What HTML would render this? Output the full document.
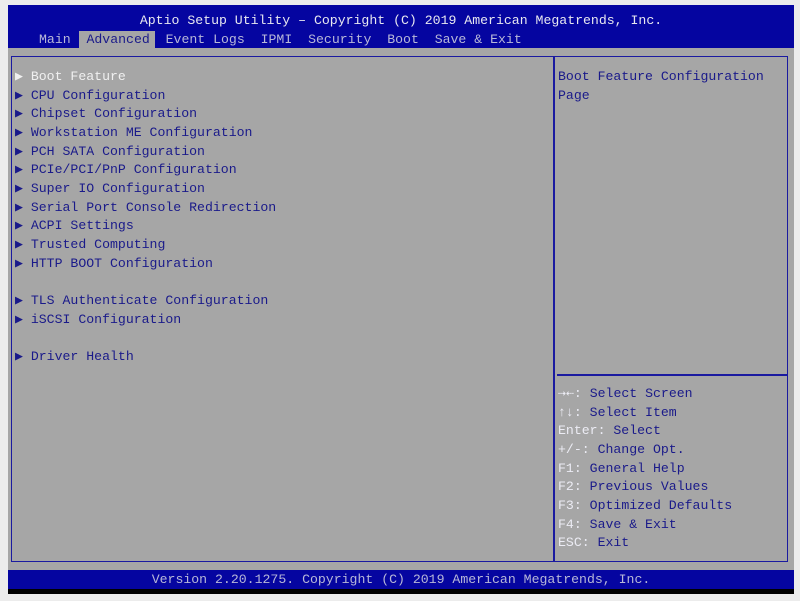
<!DOCTYPE html>
<html><head><style>
body{margin:0;width:800px;height:601px;background:#ececec;position:relative;overflow:hidden;font-family:"Liberation Mono","DejaVu Sans Mono",monospace;font-size:13.2px}
div{position:absolute}
.t{white-space:pre;line-height:18.65px}
</style></head><body>
<div style="left:8px;top:5px;width:786px;height:43px;background:#0505a0"></div>
<div class="t" style="left:8px;top:12px;width:786px;text-align:center;color:#e8e8f0">Aptio Setup Utility – Copyright (C) 2019 American Megatrends, Inc.</div>
<div style="left:79px;top:31px;width:76px;height:17px;background:#a6a6a6"></div>
<div class="t" style="left:39px;top:31px;color:#b8b8d8">Main  <span style="color:#1a1a8a">Advanced</span>  Event Logs  IPMI  Security  Boot  Save &amp; Exit</div>
<div style="left:8px;top:48px;width:786px;height:522px;background:#a6a6a6"></div>
<div style="left:11px;top:56px;width:775px;height:504px;border:1.5px solid #1a1aa0"></div>
<div style="left:553px;top:57px;width:1.5px;height:504px;background:#1a1aa0"></div>
<div style="left:557px;top:374px;width:230px;height:1.5px;background:#1a1aa0"></div>
<div class="t" style="left:15px;top:68px;color:#1a1a8a"><span style="color:#f0f0f0">▶ Boot Feature</span>
▶ CPU Configuration
▶ Chipset Configuration
▶ Workstation ME Configuration
▶ PCH SATA Configuration
▶ PCIe/PCI/PnP Configuration
▶ Super IO Configuration
▶ Serial Port Console Redirection
▶ ACPI Settings
▶ Trusted Computing
▶ HTTP BOOT Configuration

▶ TLS Authenticate Configuration
▶ iSCSI Configuration

▶ Driver Health</div>
<div class="t" style="left:558px;top:68px;color:#1a1a8a">Boot Feature Configuration
Page</div>
<div class="t" style="left:558px;top:385px;color:#1a1a8a"><span style="color:#ececf4">⇢⇠:</span> Select Screen
<span style="color:#ececf4">↑↓:</span> Select Item
<span style="color:#ececf4">Enter:</span> Select
<span style="color:#ececf4">+/-:</span> Change Opt.
<span style="color:#ececf4">F1:</span> General Help
<span style="color:#ececf4">F2:</span> Previous Values
<span style="color:#ececf4">F3:</span> Optimized Defaults
<span style="color:#ececf4">F4:</span> Save &amp; Exit
<span style="color:#ececf4">ESC:</span> Exit</div>
<div style="left:8px;top:570px;width:786px;height:19px;background:#0505a0"></div>
<div style="left:8px;top:589px;width:786px;height:5px;background:#000"></div>
<div class="t" style="left:8px;top:571px;width:786px;text-align:center;color:#b8b8d8">Version 2.20.1275. Copyright (C) 2019 American Megatrends, Inc.</div>
</body></html>
